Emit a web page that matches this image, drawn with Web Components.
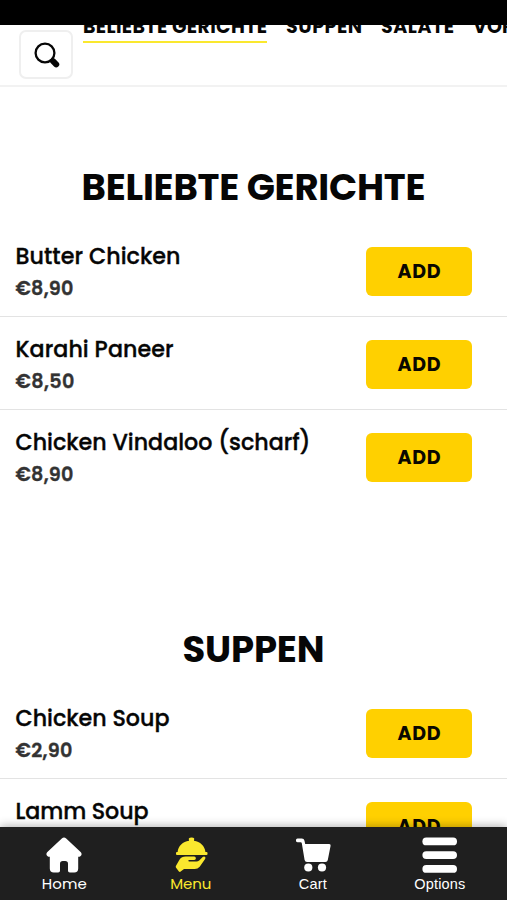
<!DOCTYPE html>
<html lang="de">
<head>
<meta charset="utf-8">
<title>Speisekarte</title>
<style>
html,body{
	margin:0;
	height:900px;
	overflow:hidden;
	background:#fff;
}
body{
	font-family:Poppins,Inter,"Liberation Sans",sans-serif;
	color:#060606;
}
</style>
</head>
<body>
<menu-app>
	<category-bar slot="header">
		<fit-text width="184" class="active">BELIEBTE GERICHTE</fit-text>
		<fit-text width="76">SUPPEN</fit-text>
		<fit-text width="73">SALATE</fit-text>
		<fit-text width="118">VORSPEISEN</fit-text>
	</category-bar>
	<menu-section>
		<fit-text slot="title" width="344">BELIEBTE GERICHTE</fit-text>
		<menu-item price="€8,90" price-width="58"><fit-text width="165">Butter Chicken</fit-text></menu-item>
		<menu-item price="€8,50" price-width="59"><fit-text width="158">Karahi Paneer</fit-text></menu-item>
		<menu-item price="€8,90" price-width="58"><fit-text width="295">Chicken Vindaloo (scharf)</fit-text></menu-item>
	</menu-section>
	<menu-section>
		<fit-text slot="title" width="142">SUPPEN</fit-text>
		<menu-item price="€2,90" price-width="57"><fit-text width="154">Chicken Soup</fit-text></menu-item>
		<menu-item price="€3,90" price-width="58"><fit-text width="133">Lamm Soup</fit-text></menu-item>
	</menu-section>
	<nav-bar slot="footer">
		<nav-item icon="home"><fit-text width="45">Home</fit-text></nav-item>
		<nav-item icon="menu" class="active"><fit-text width="41">Menu</fit-text></nav-item>
		<nav-item icon="cart" class="plain"><fit-text width="28">Cart</fit-text></nav-item>
		<nav-item icon="options" class="plain"><fit-text width="51">Options</fit-text></nav-item>
	</nav-bar>
</menu-app>

<script>
'use strict';

const icons = {
	search:'<svg viewBox="0 0 26 26" width="26" height="26"><circle cx="11" cy="11" r="9.4" fill="none" stroke="#060606" stroke-width="2.3"/><path d="M17 17.5l1.2 1.2" stroke="#060606" stroke-width="3"/><path d="M19 19.200l3.200 3.200" stroke="#060606" stroke-width="6" stroke-linecap="round"/></svg>',
	home:'<svg viewBox="0 0 36 36" width="36" height="36"><path fill="currentColor" d="M15.8 1.5q2.2-1.8 4.4 0L34.6 15q2.1 2.4-.2 4.2-.9.7-2.2.6V31.500q0 4-4 4h-4.400q-1.800 0-1.800-1.800v-6.900q0-2.800-2.800-2.800h-2.400q-2.800 0-2.800 2.800v6.900q0 1.800-1.800 1.800H7.800q-4 0-4-4V19.800q-1.300.1-2.200-.6-2.300-1.800-.2-4.200z"/></svg>',
	menu:'<svg viewBox="0 0 36 36" width="36" height="36"><g fill="currentColor"><rect x="3" y="15" width="31.500" height="2.900" rx="1"/><path d="M4.600 15.500C5 8.800 10 4.600 16 3.800V3Q14.800.6 18.500.5T21 3v.8c6 .8 11 5 11.500 11.700z"/><path d="M3 28.800l3.300-5.900Q8.700 19.500 13 19.600h8.200q1.600.1 1.700 1.600 0 1.600-1.700 1.700h-5q-.9 0-.9.800t.9.800h7.300q1.500 0 2.700-1l3.500-3.500q1.500-.9 2.500.1.500.9-.1 1.800l-5.400 7.900q-2 2.300-5 2.300H11l-3 2.200Q6.900 35.500 5.900 34.500L2.900 30.500q-.4-.9.100-1.700z"/></g></svg>',
	cart:'<svg viewBox="0 0 36 36" width="36" height="36"><g fill="currentColor"><path d="M2.500 1.500h4.300Q9 1.500 9.500 3.700l.7 3.300h24q1.700 0 1.400 1.700l-2.800 14.200q-.4 2-2.400 2H12q-2 0-2.400-2L6.800 6.200Q6.600 5.300 5.700 5.200H2.500Q.9 5.100.9 3.400T2.500 1.500z"/><circle cx="13.300" cy="30.500" r="4.100"/><circle cx="27" cy="30.500" r="4.100"/></g></svg>',
	options:'<svg viewBox="0 0 36 36" width="36" height="36"><g fill="currentColor"><rect x=".4" y=".5" width="34.600" height="7.800" rx="3.900"/><rect x=".4" y="14.200" width="34.600" height="7.800" rx="3.900"/><rect x=".4" y="28" width="34.600" height="7.800" rx="3.900"/></g></svg>'
};

// a single line of text, tracked out or in to fill its width
class FitText extends HTMLElement {
	constructor(){
		super();
		this.attachShadow({mode:'open'});
		this.shadowRoot.innerHTML = `
<style>
:host{display:block;white-space:nowrap;flex:none;}
span{display:inline-block;}
</style><span><slot></slot></span>`;
	}

	connectedCallback(){
		requestAnimationFrame(()=>{ this.Fit(); });
	}

	Fit(){
		let span = this.shadowRoot.querySelector('span');
		let target = Number(this.getAttribute('width'));
		let count = this.textContent.length;
		this.style.width = target + 'px';
		span.style.letterSpacing = '0';
		let gap = target - span.getBoundingClientRect().width;
		gap /= count - 1;
		span.style.letterSpacing = gap.toFixed(3) + 'px';
	}
}

class MenuApp extends HTMLElement {
	constructor(){
		super();
		this.attachShadow({mode:'open'});
		this.shadowRoot.innerHTML = `
<style>
:host{
	display:grid;
	grid-template-rows:25px 62px 740px 73px;
	height:900px;
}
.status{background:#000;}
main{overflow:hidden;}
</style>
<div class="status"></div>
<slot name="header"></slot>
<main><slot></slot></main>
<slot name="footer"></slot>`;
	}
}

class CategoryBar extends HTMLElement {
	constructor(){
		super();
		this.attachShadow({mode:'open'});
		this.shadowRoot.innerHTML = `
<style>
:host{
	display:flex;
	box-sizing:border-box;
	overflow:hidden;
	border-bottom:2px solid #f2f2f2;
	padding-left:19px;
}
button{
	flex:none;
	display:flex;
	align-items:center;
	justify-content:center;
	box-sizing:border-box;
	width:54px;
	height:49px;
	margin:5px 10px 0 0;
	padding:0 0 0 2px;
	border:2px solid #efefef;
	border-radius:7px;
	background:#fff;
}
nav{
	display:flex;
	align-items:flex-start;
	gap:19px;
	margin-top:-8px;
	font-size:19px;
	line-height:20px;
	font-weight:700;
}
::slotted(*){
	padding-bottom:4px;
	border-bottom:2px solid transparent;
}
::slotted(.active){border-color:#fae82e;}
</style>
<button aria-label="Suche">${icons.search}</button>
<nav><slot></slot></nav>`;
	}
}

class MenuSection extends HTMLElement {
	constructor(){
		super();
		this.attachShadow({mode:'open'});
		this.shadowRoot.innerHTML = `
<style>
:host{
	display:block;
	padding:75px 0 46px;
}
h2{
	display:flex;
	justify-content:center;
	margin:0 0 12px;
	font-size:37px;
	line-height:50px;
	font-weight:700;
}
</style>
<h2><slot name="title"></slot></h2>
<slot></slot>`;
	}
}

class MenuItem extends HTMLElement {
	constructor(){
		super();
		this.attachShadow({mode:'open'});
		this.shadowRoot.innerHTML = `
<style>
:host{
	display:flex;
	align-items:flex-start;
	justify-content:space-between;
	box-sizing:border-box;
	height:93px;
	padding:17px 35px 0 15px;
	border-bottom:1px solid #e3e3e3;
}
:host(:last-of-type){border-color:transparent;}
.name{
	padding:1px 0 0 .5px;
	font-size:22.200px;
	line-height:30px;
	font-weight:500;
	-webkit-text-stroke:.35px;
}
.price{
	margin-top:2px;
	padding-left:.5px;
	font-size:19.200px;
	line-height:30px;
	font-weight:600;
	color:#333;
	-webkit-text-stroke:.35px;
}
button{
	display:flex;
	align-items:center;
	justify-content:center;
	width:106px;
	height:49px;
	margin:6px 0 0;
	padding:0;
	border:0;
	border-radius:6px;
	background:#ffd000;
	color:#0a0800;
	font:700 19px/24px Poppins,Inter,"Liberation Sans",sans-serif;
}
</style>
<div>
	<div class="name"><slot></slot></div>
	<div class="price"><fit-text width="${this.getAttribute('price-width')}">${this.getAttribute('price')}</fit-text></div>
</div>
<button><fit-text width="43">ADD</fit-text></button>`;
	}
}

class NavBar extends HTMLElement {
	constructor(){
		super();
		this.attachShadow({mode:'open'});
		this.shadowRoot.innerHTML = `
<style>
:host{
	display:flex;
	justify-content:space-around;
	position:relative;
	background:#1f1f1f;
	color:#fff;
	box-shadow:0 -1px 9px rgba(0,0,0,.32);
}
</style>
<slot></slot>`;
	}
}

class NavItem extends HTMLElement {
	constructor(){
		super();
		this.attachShadow({mode:'open'});
		this.shadowRoot.innerHTML = `
<style>
:host{
	display:flex;
	flex-direction:column;
	align-items:center;
	padding-top:10px;
	font-size:15px;
	line-height:20px;
}
:host(.active){color:#fae82e;}
:host(.plain){font-family:"Liberation Sans",Arial,sans-serif;font-size:14.500px;}
svg{display:block;margin-bottom:1px;}
</style>
${icons[this.getAttribute('icon')]}
<slot></slot>`;
	}
}

window.customElements.define('fit-text',FitText);
window.customElements.define('menu-app',MenuApp);
window.customElements.define('category-bar',CategoryBar);
window.customElements.define('menu-section',MenuSection);
window.customElements.define('menu-item',MenuItem);
window.customElements.define('nav-bar',NavBar);
window.customElements.define('nav-item',NavItem);
</script>
</body>
</html>
